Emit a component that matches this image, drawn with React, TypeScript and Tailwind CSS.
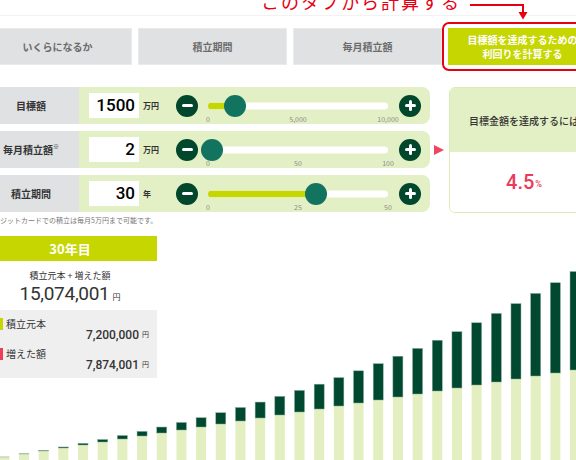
import React from "react";

type SliderRow = {
  label: string;
  note?: boolean;
  value: string;
  unit: string;
  pct: number;
  ticks: [string, string, string];
};

const rows: SliderRow[] = [
  { label: "目標額", value: "1500", unit: "万円", pct: 15, ticks: ["0", "5,000", "10,000"] },
  { label: "毎月積立額", note: true, value: "2", unit: "万円", pct: 2, ticks: ["0", "50", "100"] },
  { label: "積立期間", value: "30", unit: "年", pct: 60, ticks: ["0", "25", "50"] },
];

const tabs = ["いくらになるか", "積立期間", "毎月積立額"];

// yearly bars: principal (light) + growth (dark)
const rate = 0.045 / 12;
const fv = (n: number) => (20000 * ((1 + rate) ** (12 * n) - 1)) / rate;
const norm = 15074001 / fv(30);
const scale = 12.5e-6;
const base = 236;
const bars = Array.from({ length: 30 }, (_, i) => {
  const n = i + 1;
  const principal = 240000 * n;
  const total = Math.max(fv(n) * norm, principal);
  return { x: -0.7 + i * 19.68, p: principal * scale, t: total * scale };
});

function RoundButton({ plus = false }: { plus?: boolean }) {
  return (
    <div className="relative flex h-[22px] w-[22px] shrink-0 items-center justify-center rounded-full bg-[#00472c]">
      <span className="absolute h-[3px] w-[11px] rounded-full bg-white" />
      {plus && <span className="absolute h-[11px] w-[3px] rounded-full bg-white" />}
    </div>
  );
}

function Slider({ pct, ticks }: { pct: number; ticks: [string, string, string] }) {
  return (
    <div className="relative ml-[10px] h-full w-[180px] shrink-0">
      <div className="absolute left-0 right-0 top-1/2 h-[7px] -translate-y-1/2 overflow-hidden rounded-full bg-white">
        <div className="h-full bg-[#c5d600]" style={{ width: `${pct}%` }} />
      </div>
      <div
        className="absolute top-1/2 h-[22px] w-[22px] -translate-y-1/2 rounded-full bg-[#12745e]"
        style={{ left: `calc(${pct}% - 11px)` }}
      />
      <span className="absolute left-0 top-[28px] -translate-x-1/2 text-[7px] leading-[8px] text-[#8c8c8c]">{ticks[0]}</span>
      <span className="absolute left-1/2 top-[28px] -translate-x-1/2 text-[7px] leading-[8px] text-[#8c8c8c]">{ticks[1]}</span>
      <span className="absolute left-full top-[28px] -translate-x-1/2 text-[7px] leading-[8px] text-[#8c8c8c]">{ticks[2]}</span>
    </div>
  );
}

export default function App() {
  return (
    <div className="relative h-[460px] w-[576px] overflow-hidden bg-white font-['Noto_Sans_CJK_JP',sans-serif] text-[#333]">
      {/* red annotation over the tabs */}
      <div className="absolute left-[261px] top-[-8px] z-20 text-[18px] leading-[18px] tracking-[2px] text-[#e60012]">
        このタブから計算する
      </div>
      <svg className="absolute left-0 top-0 z-20" width="576" height="24" viewBox="0 0 576 24">
        <path d="M470 5 H523 V13" fill="none" stroke="#e60012" strokeWidth="2" />
        <path d="M518.5 12 H527.5 L523 19.5 Z" fill="#e60012" />
      </svg>

      <div className="ml-[-17px] w-[614px]">
        <div className="h-[16px] border-b border-[#f2f2f2]" />

        {/* tabs */}
        <div className="mt-[12px] flex gap-[6px]">
          {tabs.map((t) => (
            <div
              key={t}
              className="flex h-[37px] w-[149px] shrink-0 items-center justify-center border border-[#e9eaeb] bg-[#e0e1e3] text-[10px] font-bold text-[#6b6b6b]"
            >
              {t}
            </div>
          ))}
          <div className="-m-[6px] shrink-0 rounded-[7px] border-2 border-[#e60012] p-[4px]">
            <div className="flex h-[37px] w-[149px] flex-col items-center justify-center bg-[#c5d600] text-[10px] font-bold leading-[14px] text-white">
              <span>目標額を達成するための</span>
              <span>利回りを計算する</span>
            </div>
          </div>
        </div>

        {/* inputs + result */}
        <div className="mt-[22px] flex">
          <div className="flex w-[447px] shrink-0 flex-col gap-[7px]">
            {rows.map((r) => (
              <div key={r.label} className="flex h-[37px]">
                <div className="flex w-[96px] shrink-0 items-center justify-center bg-[#e0e1e3] text-[10px] font-bold">
                  {r.label}
                  {r.note && <sup className="text-[6px] font-bold text-[#333]">※</sup>}
                </div>
                <div className="flex w-[351px] shrink-0 items-center rounded-r-[8px] bg-[#e3efc4] pl-[10px]">
                  <div className="flex h-[25px] w-[50px] shrink-0 items-center justify-end bg-white pr-[4px] font-['Roboto',sans-serif] text-[17px] font-medium text-black">
                    {r.value}
                  </div>
                  <span className="ml-[4px] w-[33px] shrink-0 text-[8px] font-bold">{r.unit}</span>
                  <RoundButton />
                  <Slider pct={r.pct} ticks={r.ticks} />
                  <div className="ml-[11px]">
                    <RoundButton plus />
                  </div>
                </div>
              </div>
            ))}
          </div>

          <div className="ml-[4px] h-0 w-0 self-center border-y-[5px] border-l-[10px] border-y-transparent border-l-[#ef4662]" />

          <div className="ml-[5px] flex h-[126px] w-[150px] shrink-0 flex-col overflow-hidden rounded-[6px] border border-[#dde9b8]">
            <div className="flex h-[64px] items-center justify-center whitespace-nowrap bg-[#e3efc4] text-[10px] font-medium">
              目標金額を達成するには
            </div>
            <div className="flex flex-1 items-center justify-center bg-white font-['Roboto',sans-serif] text-[#ea3b5b]">
              <span className="text-[20px] font-medium leading-none">4.5</span>
              <span className="ml-[1px] mt-[6px] text-[9px] font-medium">%</span>
            </div>
          </div>
        </div>

        <p className="mt-[3px] pl-[3px] text-[7px] leading-[8px] text-[#777]">
          クレジットカードでの積立は毎月5万円まで可能です。
        </p>

        {/* chart + summary */}
        <div className="relative h-[237px]">
          <svg className="absolute left-[17px] top-0" width="576" height="237" viewBox="0 0 576 237">
            {bars.map((b, i) => (
              <g key={i}>
                <rect x={b.x} y={base - b.p} width="10" height={b.p + 4} fill="#e3efc0" />
                <rect
                  x={b.x}
                  y={base - b.t}
                  width="10"
                  height={Math.max(b.t - b.p, 0)}
                  fill="#00482f"
                  stroke="#86ab98"
                  strokeWidth="0.5"
                />
              </g>
            ))}
          </svg>

          <div className="relative z-10 w-[174px] pt-[12px]">
            <div className="flex h-[25px] items-center justify-center bg-[#c5d600] text-[13px] font-bold text-white">
              30年目
            </div>
            <div className="flex h-[49px] flex-col items-center bg-white pt-[9px]">
              <span className="text-[9px] leading-[12px]">積立元本 + 増えた額</span>
              <span className="mt-[2px] flex items-baseline leading-[20px]">
                <span className="font-['Roboto',sans-serif] text-[19px] tracking-[-0.3px]">15,074,001</span>
                <span className="ml-[3px] text-[8px]">円</span>
              </span>
            </div>
            <div className="h-[68px] bg-[#efefef] pl-[17px] pr-[8px] pt-[8px]">
              <div className="flex h-[11px] items-center">
                <span className="h-[12px] w-[3px] bg-[#c5d600]" />
                <span className="ml-[3px] text-[10px] leading-[11px]">積立元本</span>
              </div>
              <div className="flex h-[11px] items-center justify-end">
                <span className="font-['Roboto',sans-serif] text-[12px] font-medium">7,200,000</span>
                <span className="ml-[3px] text-[7px]">円</span>
              </div>
              <div className="mt-[8px] flex h-[11px] items-center">
                <span className="h-[12px] w-[3px] bg-[#ef3e5c]" />
                <span className="ml-[3px] text-[10px] leading-[11px]">増えた額</span>
              </div>
              <div className="flex h-[11px] items-center justify-end">
                <span className="font-['Roboto',sans-serif] text-[12px] font-medium">7,874,001</span>
                <span className="ml-[3px] text-[7px]">円</span>
              </div>
            </div>
          </div>
        </div>
      </div>
    </div>
  );
}
